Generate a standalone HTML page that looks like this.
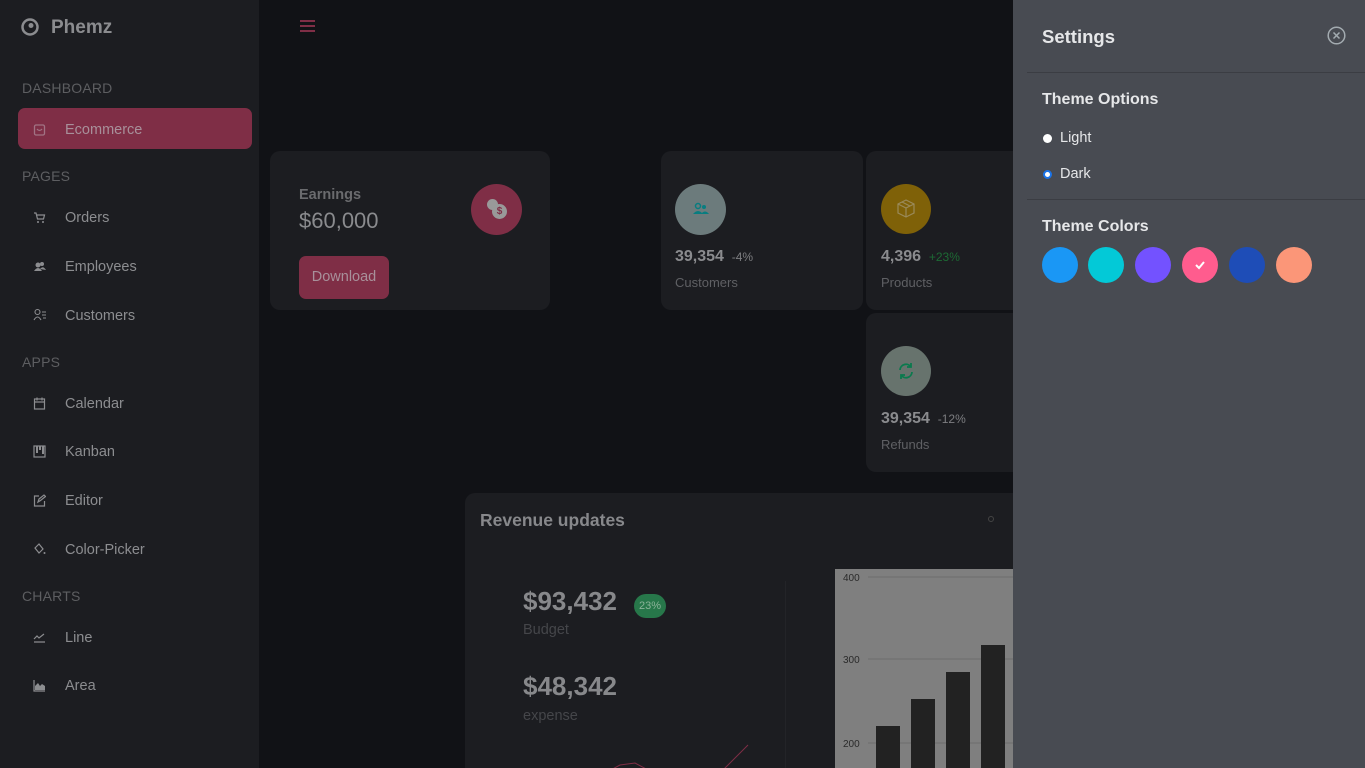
<!DOCTYPE html>
<html style="overflow:hidden;width:1365px;height:768px"><head><style>
*{box-sizing:border-box;margin:0;padding:0}
html,body{overflow:hidden}
body{width:1365px;height:768px;overflow:hidden;background:#111216;font-family:"Liberation Sans",sans-serif;position:relative;color:#8a8b8e}
.sb{position:absolute;left:0;top:0;width:259px;height:768px;background:#1c1d21}
.abs{position:absolute}
.sec{position:absolute;left:22px;font-size:14px;color:#5d5e61;letter-spacing:.2px}
.it{position:absolute;left:65px;font-size:14.5px;color:#8c8d90}
.ic{position:absolute;left:33px;width:13px;height:13px}
.card{position:absolute;background:#1c1d21;border-radius:10px}
.circ{position:absolute;border-radius:50%}
.big{font-weight:bold;font-size:16px;color:#8a8b8e}
.lab{font-size:13px;color:#5f6064}
.panel{position:absolute;left:1013px;top:0;width:352px;height:768px;background:#484b52;color:#e6e7e9}
</style></head><body>
<div class="sb">
 <svg class="abs" style="left:21px;top:18px" width="18" height="18" viewBox="0 0 18 18"><circle cx="9" cy="9" r="7.5" fill="none" stroke="#8b8c8f" stroke-width="2.5"/><circle cx="10" cy="7.5" r="2.5" fill="#8b8c8f"/></svg>
 <div class="abs" style="left:51px;top:17px;font-size:19px;font-weight:bold;color:#8b8c8f">Phemz</div>
 <div class="sec" style="top:80px">DASHBOARD</div>
 <div class="abs" style="left:18px;top:108px;width:234px;height:41px;background:#7f2e46;border-radius:7px"></div>
 <svg class="ic" style="top:123px" viewBox="0 0 13 13"><rect x="1.5" y="2" width="10" height="10" rx="1.5" fill="none" stroke="#a17384" stroke-width="1.3"/><path d="M4 6q2.5 3 5 0" fill="none" stroke="#a17384" stroke-width="1.3"/></svg>
 <div class="it" style="top:122px;color:#a8909a">Ecommerce</div>
 <div class="sec" style="top:168px">PAGES</div>
 <svg class="ic" style="top:211px" viewBox="0 0 13 13"><path d="M1 2h2l1.5 6h6l1-4H4" fill="none" stroke="#8c8d90" stroke-width="1.2"/><circle cx="5" cy="11" r="1" fill="#8c8d90"/><circle cx="10" cy="11" r="1" fill="#8c8d90"/></svg>
 <div class="it" style="top:210px">Orders</div>
 <svg class="ic" style="top:260px" viewBox="0 0 13 13"><circle cx="5" cy="5" r="2.5" fill="#8c8d90"/><circle cx="9" cy="4" r="2" fill="#8c8d90"/><path d="M1 11q4-6 8 0zM7 9q3-4 6 1z" fill="#8c8d90"/></svg>
 <div class="it" style="top:259px">Employees</div>
 <svg class="ic" style="top:308px" viewBox="0 0 13 13"><circle cx="4.5" cy="4" r="2.5" fill="none" stroke="#8c8d90" stroke-width="1.1"/><path d="M1 12q3.5-6 7 0M9 4h4M9 7h4M10 10h3" fill="none" stroke="#8c8d90" stroke-width="1.1"/></svg>
 <div class="it" style="top:308px">Customers</div>
 <div class="sec" style="top:354px">APPS</div>
 <svg class="ic" style="top:397px" viewBox="0 0 13 13"><rect x="1.5" y="2" width="10" height="10" fill="none" stroke="#8c8d90" stroke-width="1.2"/><path d="M1.5 5h10M4 .5v3M9 .5v3" stroke="#8c8d90" stroke-width="1.2"/></svg>
 <div class="it" style="top:396px">Calendar</div>
 <svg class="ic" style="top:445px" viewBox="0 0 13 13"><rect x="1" y="1" width="11" height="11" fill="none" stroke="#8c8d90" stroke-width="1.2"/><rect x="3" y="1" width="2" height="7" fill="#8c8d90"/><rect x="6" y="1" width="2" height="4" fill="#8c8d90"/><rect x="9" y="1" width="2" height="8" fill="#8c8d90"/></svg>
 <div class="it" style="top:444px">Kanban</div>
 <svg class="ic" style="top:494px" viewBox="0 0 13 13"><path d="M6 2H1.5v10h10V7M5 8l1-3 5-4 1.5 1.5-5 4z" fill="none" stroke="#8c8d90" stroke-width="1.2"/></svg>
 <div class="it" style="top:493px">Editor</div>
 <svg class="ic" style="top:543px" viewBox="0 0 13 13"><path d="M2 5l4-4 4 5-4 4z" fill="none" stroke="#8c8d90" stroke-width="1.2"/><circle cx="11.5" cy="10" r="1" fill="#8c8d90"/></svg>
 <div class="it" style="top:542px">Color-Picker</div>
 <div class="sec" style="top:588px">CHARTS</div>
 <svg class="ic" style="top:631px" viewBox="0 0 13 13"><path d="M1 8l3-3 2 2 5-4M1 11h11" fill="none" stroke="#8c8d90" stroke-width="1.2"/></svg>
 <div class="it" style="top:630px">Line</div>
 <svg class="ic" style="top:679px" viewBox="0 0 13 13"><path d="M1 1v11h11" fill="none" stroke="#8c8d90" stroke-width="1.2"/><path d="M2 11V7l3-3 2 3 2-2 3 2v4z" fill="#8c8d90"/></svg>
 <div class="it" style="top:678px">Area</div>
</div>
<div class="abs" style="left:300px;top:20px;width:15px">
 <div style="height:2px;background:#7f2e46;margin-bottom:3px"></div><div style="height:2px;background:#7f2e46;margin-bottom:3px"></div><div style="height:2px;background:#7f2e46"></div>
</div>
<div class="card" style="left:270px;top:151px;width:280px;height:159px">
 <div class="abs" style="left:29px;top:36px;font-size:14.5px;font-weight:bold;color:#6a6b6e">Earnings</div>
 <div class="abs" style="left:29px;top:57px;font-size:22px;color:#8a8b8e">$60,000</div>
 <div class="circ" style="left:201px;top:33px;width:51px;height:51px;background:#7f2e46"></div>
 <div class="circ" style="left:217px;top:48px;width:11px;height:11px;background:#999"></div>
 <div class="circ" style="left:222px;top:53px;width:15px;height:15px;background:#999;color:#7f2e46;font-size:10px;text-align:center;line-height:15px;font-weight:bold">$</div>
 <div class="abs" style="left:29px;top:105px;width:90px;height:43px;background:#7f2e46;border-radius:7px;color:#a8909a;font-size:14.5px;text-align:center;line-height:43px">Download</div>
</div>
<div class="card" style="left:661px;top:151px;width:202px;height:159px">
 <div class="circ" style="left:14px;top:33px;width:51px;height:51px;background:#6c7b7c"></div>
 <svg class="abs" style="left:30px;top:49px" width="20" height="20" viewBox="0 0 20 20"><circle cx="7" cy="6" r="2.5" fill="none" stroke="#087d80" stroke-width="1.5"/><circle cx="13" cy="7" r="2" fill="#087d80"/><path d="M2 14q5-6 10 0zM10 14q4-5 8 0z" fill="#087d80"/></svg>
 <div class="abs" style="left:14px;top:97px"><span class="big">39,354</span> <span style="font-size:12px;color:#7d7e81">&nbsp;-4%</span></div>
 <div class="abs lab" style="left:14px;top:124px">Customers</div>
</div>
<div class="card" style="left:866px;top:151px;width:160px;height:159px">
 <div class="circ" style="left:15px;top:33px;width:50px;height:50px;background:#7f6108"></div>
 <svg class="abs" style="left:29px;top:46px" width="22" height="22" viewBox="0 0 22 22"><path d="M11 3l8 4v9l-8 4-8-4V7zM3 7l8 4 8-4M11 11v9M7 5l8 4" fill="none" stroke="#9a8a5a" stroke-width="1.2"/></svg>
 <div class="abs" style="left:15px;top:97px"><span class="big">4,396</span> <span style="font-size:12px;color:#1d6a34">&nbsp;+23%</span></div>
 <div class="abs lab" style="left:15px;top:124px">Products</div>
</div>
<div class="card" style="left:866px;top:313px;width:160px;height:159px">
 <div class="circ" style="left:15px;top:33px;width:50px;height:50px;background:#67736d"></div>
 <svg class="abs" style="left:30px;top:48px" width="20" height="20" viewBox="0 0 20 20"><path d="M4 9a6 6 0 0 1 11-3M16 11a6 6 0 0 1-11 3M15 2v4h-4M5 18v-4h4" fill="none" stroke="#0a7a4d" stroke-width="1.8"/></svg>
 <div class="abs" style="left:15px;top:97px"><span class="big">39,354</span> <span style="font-size:12px;color:#7d7e81">&nbsp;-12%</span></div>
 <div class="abs lab" style="left:15px;top:124px">Refunds</div>
</div>
<div class="card" style="left:465px;top:493px;width:560px;height:275px;border-radius:10px 10px 0 0">
 <div class="abs" style="left:15px;top:17px;font-size:17.5px;font-weight:bold;color:#87888b">Revenue updates</div>
 <div class="abs" style="left:523px;top:23px;width:6px;height:6px;border:1px solid #444;border-radius:50%"></div>
 <div class="abs" style="left:58px;top:93px;font-size:26px;font-weight:bold;color:#87888b">$93,432</div>
 <div class="abs" style="left:169px;top:101px;width:32px;height:24px;background:#27774a;border-radius:12px;font-size:11px;color:#8bb399;text-align:center;line-height:24px">23%</div>
 <div class="abs" style="left:58px;top:129px;font-size:14.5px;color:#45464a">Budget</div>
 <div class="abs" style="left:58px;top:178px;font-size:26px;font-weight:bold;color:#87888b">$48,342</div>
 <div class="abs" style="left:58px;top:215px;font-size:14.5px;color:#45464a">expense</div>
 <div class="abs" style="left:320px;top:88px;width:1px;height:190px;background:#232428"></div>
 <svg class="abs" style="left:0;top:0" width="560" height="275"><polyline points="140,280 155,272 170,270 185,278" fill="none" stroke="#7f2e46" stroke-width="1"/><path d="M255,280 L283,252" stroke="#7f2e46"/></svg>
</div>
<svg class="abs" style="left:835px;top:569px" width="178" height="199"><rect width="178" height="199" fill="#7f7f7f"/>
 <g stroke="#6c6c6c"><line x1="33" y1="8" x2="178" y2="8"/><line x1="33" y1="90" x2="178" y2="90"/><line x1="33" y1="174" x2="178" y2="174"/></g>
 <g font-size="10" fill="#2a2a2a" font-family="Liberation Sans"><text x="8" y="12">400</text><text x="8" y="94">300</text><text x="8" y="178">200</text></g>
 <g fill="#222"><rect x="41" y="157" width="24" height="50"/><rect x="76" y="130" width="24" height="80"/><rect x="111" y="103" width="24" height="100"/><rect x="146" y="76" width="24" height="130"/></g>
</svg>
<div class="panel">
 <div class="abs" style="left:29px;top:26px;font-size:18.5px;font-weight:bold">Settings</div>
 <svg class="abs" style="left:314px;top:26px" width="19" height="19" viewBox="0 0 19 19"><circle cx="9.5" cy="9.5" r="8.3" fill="none" stroke="#a3abb0" stroke-width="1.5"/><path d="M6.5 6.5l6 6M12.5 6.5l-6 6" stroke="#a3abb0" stroke-width="1.5"/></svg>
 <div class="abs" style="left:14px;top:72px;width:338px;height:1px;background:#3b3d43"></div>
 <div class="abs" style="left:29px;top:91px;font-size:16px;font-weight:bold">Theme Options</div>
 <div class="circ" style="left:30px;top:134px;width:9px;height:9px;background:#fff"></div>
 <div class="abs" style="left:47px;top:130px;font-size:14.5px">Light</div>
 <div class="circ" style="left:30px;top:170px;width:9px;height:9px;background:#fff;border:2px solid #1a73e8"></div>
 <div class="abs" style="left:47px;top:166px;font-size:14.5px">Dark</div>
 <div class="abs" style="left:14px;top:199px;width:338px;height:1px;background:#3b3d43"></div>
 <div class="abs" style="left:29px;top:218px;font-size:16px;font-weight:bold">Theme Colors</div>
 <div class="circ" style="left:29px;top:247px;width:36px;height:36px;background:#1a97f5"></div>
 <div class="circ" style="left:75px;top:247px;width:36px;height:36px;background:#03c9d7"></div>
 <div class="circ" style="left:122px;top:247px;width:36px;height:36px;background:#7352ff"></div>
 <div class="circ" style="left:169px;top:247px;width:36px;height:36px;background:#ff5c8e"></div>
 <svg class="abs" style="left:180px;top:258px" width="14" height="14"><path d="M3 7l3 3 5-6" fill="none" stroke="#fff" stroke-width="2"/></svg>
 <div class="circ" style="left:216px;top:247px;width:36px;height:36px;background:#1e4db7"></div>
 <div class="circ" style="left:263px;top:247px;width:36px;height:36px;background:#fb9678"></div>
</div>
</body></html>
